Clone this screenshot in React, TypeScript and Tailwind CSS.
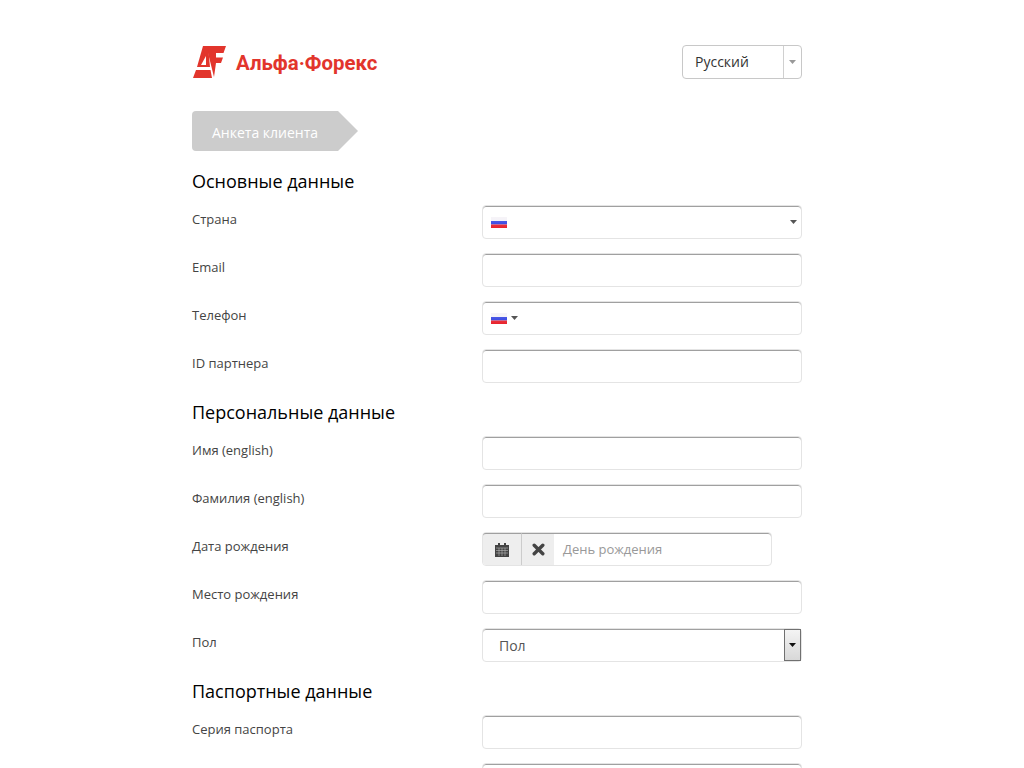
const font = "font-['Open_Sans',sans-serif]"

function Flag() {
  return (
    <svg width="16" height="11" viewBox="0 0 16 11" className="block">
      <defs>
        <linearGradient id="gloss" x1="0" y1="0" x2="0" y2="1">
          <stop offset="0" stopColor="#fff" stopOpacity="0.25" />
          <stop offset="1" stopColor="#fff" stopOpacity="0" />
        </linearGradient>
      </defs>
      <rect width="16" height="4" fill="#f3f0f6" />
      <rect y="4" width="16" height="3.5" fill="#2a3ae0" />
      <rect y="7.5" width="16" height="3.5" fill="#e8222c" />
      <rect width="16" height="11" fill="url(#gloss)" />
    </svg>
  )
}

function Caret({ color = "#555" }: { color?: string }) {
  return (
    <svg width="7" height="4" viewBox="0 0 7 4" className="block">
      <path d="M0 0h7L3.5 4z" fill={color} />
    </svg>
  )
}

function Box({ children, className = "" }: { children?: React.ReactNode; className?: string }) {
  return (
    <div className={`w-[320px] h-[34px] bg-white rounded-[4px] border border-[#e4e4e4] shadow-[inset_0_1px_0_#a0a0a0] flex items-center ${className}`}>
      {children}
    </div>
  )
}

function Row({ label, children }: { label: string; children?: React.ReactNode }) {
  return (
    <div className="flex h-[48px]">
      <div className="w-[290px] pt-[4px] text-[13px] leading-[20px] text-[#444]">{label}</div>
      {children ?? <Box />}
    </div>
  )
}

function Heading({ children }: { children: React.ReactNode }) {
  return <h2 className="h-[39px] pt-[3px] text-[18px] leading-[24px] text-black">{children}</h2>
}

export default function App() {
  return (
    <div className={`h-[768px] overflow-hidden bg-white ${font}`}>
      <div className="w-[610px] ml-[192px] pt-[45px]">
        <header className="flex justify-between items-start h-[66px]">
          <div className="flex items-center gap-[10px] h-[34px]">
            <svg width="34" height="32" viewBox="0 0 34 32" className="block">
              {/* F with its tapered stem */}
              <path d="M11 0H34L31.5 7H24V11.5H31L29 17H24L22 31L16 7H11Z" fill="#e2352c" />
              {/* A upper part, then the base bar under the white band */}
              <path d="M11 0H16L18 21H5Z" fill="#e2352c" />
              <path d="M4 24H18.5L20 32H1Z" fill="#e2352c" />
              <path d="M9 19H14V10Z" fill="#fff" />
            </svg>
            <span className="font-['Roboto',sans-serif] font-bold text-[20.4px] leading-[34px] pt-[2px] text-[#e2352c]">Альфа·Форекс</span>
          </div>
          <div className="w-[120px] h-[34px] rounded-[4px] border border-[#c8c8c8] flex items-center">
            <div className="flex-1 pl-[12px] pb-[2px] text-[14px] text-[#333]">Русский</div>
            <div className="w-[18px] h-full border-l border-[#d0d0d0] flex items-center justify-center">
              <Caret color="#999" />
            </div>
          </div>
        </header>

        <div className="flex h-[40px] mb-[15px]">
          <div className="w-[146px] bg-[#cccccc] rounded-l-[4px] pl-[20px] text-[14px] leading-[44px] text-white">Анкета клиента</div>
          <div className="border-y-[20px] border-l-[20px] border-y-transparent border-l-[#cccccc]" />
        </div>

        <Heading>Основные данные</Heading>
        <Row label="Страна">
          <Box className="pl-[8px] pr-[4px] justify-between">
            <Flag />
            <Caret />
          </Box>
        </Row>
        <Row label="Email" />
        <Row label="Телефон">
          <Box className="pl-[8px] gap-[4px]">
            <Flag />
            <Caret />
          </Box>
        </Row>
        <Row label="ID партнера" />

        <Heading>Персональные данные</Heading>
        <Row label="Имя (english)" />
        <Row label="Фамилия (english)" />
        <Row label="Дата рождения">
          <div className="w-[290px] h-[34px] flex rounded-[4px] border border-[#e4e4e4] shadow-[inset_0_1px_0_#a0a0a0]">
            <div className="w-[39px] bg-[#eeeeee] rounded-l-[3px] border-r border-[#cccccc] border-t border-t-[#a0a0a0] flex items-center justify-center">
              <svg width="14" height="14" viewBox="0 0 14 14" className="block">
                <path d="M0 2h14v12H0zM3 0h2v3H3zM9 0h2v3H9z" fill="#444" />
                <path d="M1 5h12M1 7.5h12M1 10h12M4 5v8M7 5v8M10 5v8" stroke="#bbb" strokeWidth="0.6" />
              </svg>
            </div>
            <div className="w-[32px] bg-[#eeeeee] border-t border-[#a0a0a0] flex items-center justify-center">
              <svg width="13" height="13" viewBox="0 0 13 13" className="block">
                <path d="M2.2 2.2L10.8 10.8M10.8 2.2L2.2 10.8" stroke="#444" strokeWidth="3.4" strokeLinecap="round" />
              </svg>
            </div>
            <div className="flex-1 pl-[9px] text-[13px] leading-[32px] text-[#999]">День рождения</div>
          </div>
        </Row>
        <Row label="Место рождения" />
        <Row label="Пол">
          <Box className="pl-[16px] pr-0 relative">
            <span className="text-[14px] text-[#555] pt-[1px]">Пол</span>
            <div className="absolute right-0 top-0 w-[17px] h-[32px] border border-[#707070] bg-linear-to-b from-[#f4f4f4] to-[#d8d8d8] flex items-center justify-center">
              <Caret color="#111" />
            </div>
          </Box>
        </Row>

        <Heading>Паспортные данные</Heading>
        <Row label="Серия паспорта" />
        <Row label="" />
      </div>
    </div>
  )
}
